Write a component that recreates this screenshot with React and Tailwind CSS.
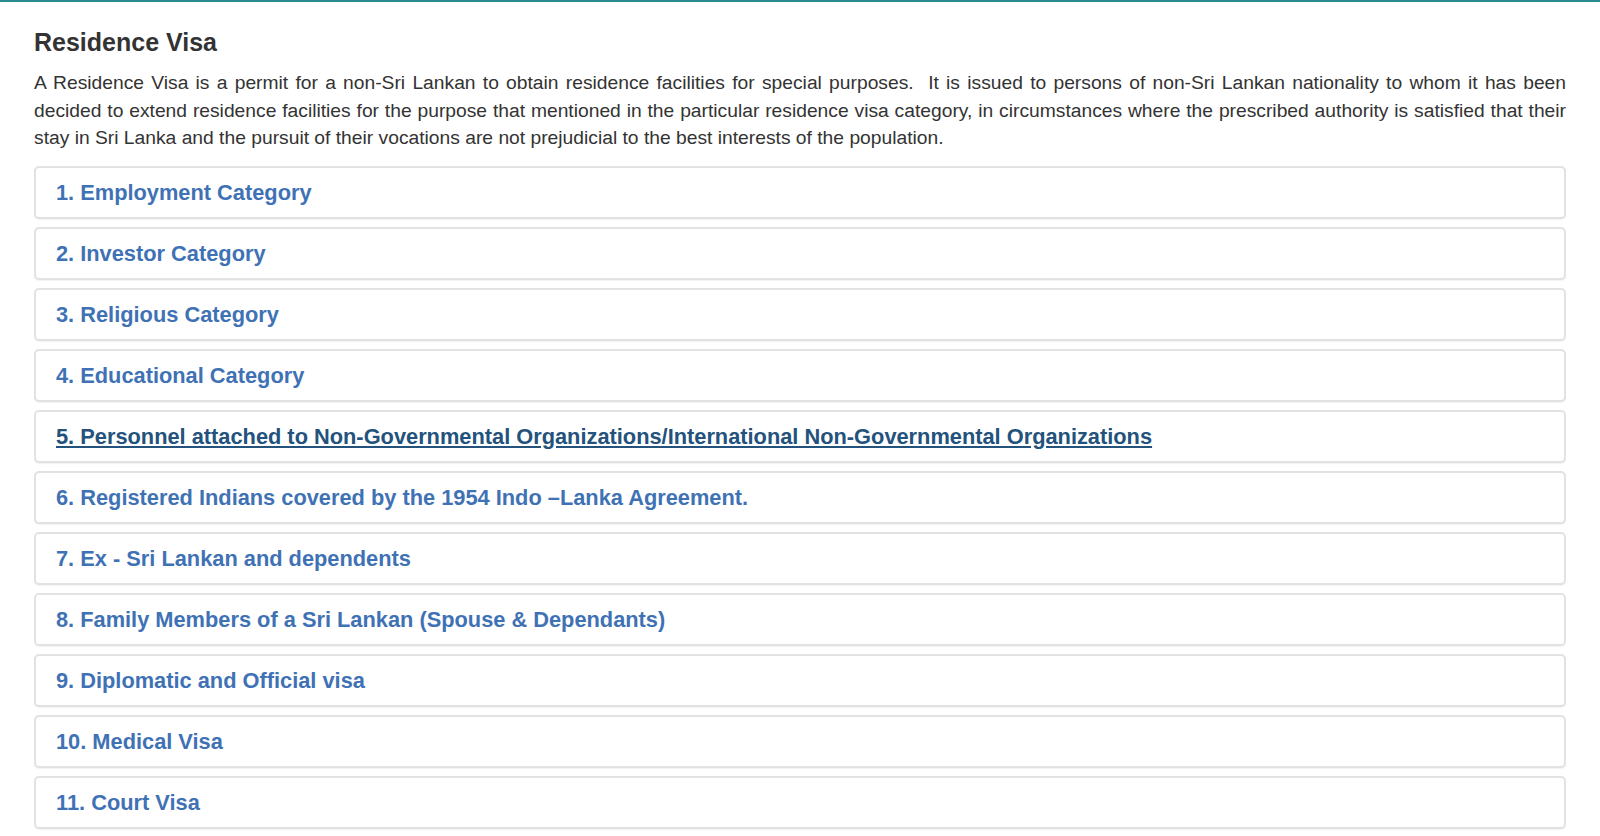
import React from 'react';

const categories = [
    "1. Employment Category",
    "2. Investor Category",
    "3. Religious Category",
    "4. Educational Category",
    "5. Personnel attached to Non-Governmental Organizations/International Non-Governmental Organizations",
    "6. Registered Indians covered by the 1954 Indo –Lanka Agreement.",
    "7. Ex - Sri Lankan and dependents",
    "8. Family Members of a Sri Lankan (Spouse & Dependants)",
    "9. Diplomatic and Official visa",
    "10. Medical Visa",
    "11. Court Visa",
];

export default function App() {
    return (
        <div className="min-h-screen bg-white border-t-2 border-[#2b8a8e] text-[#333] font-['Liberation_Sans',Arial,sans-serif]">
            <div className="px-[34px] pt-[26px]">
                {/* Title */}
                <h2 className="text-[25px] leading-[28px] font-bold">Residence Visa</h2>

                {/* Intro */}
                <p className="mt-[13px] text-[19.25px] leading-[27.5px] text-justify">
                    A Residence Visa is a permit for a non-Sri Lankan to obtain residence facilities for special purposes.&nbsp; It is issued to persons of non-Sri Lankan nationality to whom it has been decided to extend residence facilities for the purpose that mentioned in the particular residence visa category, in circumstances where the prescribed authority is satisfied that their stay in Sri Lanka and the pursuit of their vocations are not prejudicial to the best interests of the population.
                </p>

                {/* Category panels */}
                <div className="mt-[14px] flex flex-col gap-[8px]">
                    {categories.map((label, i) => (
                        <div
                            key={label}
                            className="flex items-center h-[53px] border-2 border-[#e2e2e2] rounded-[5px] bg-white shadow-[0_1px_1px_rgba(0,0,0,0.05)] px-[20px] text-[21.8px] leading-[25px]"
                        >
                            <a
                                href="#"
                                className={
                                    i === 4
                                        ? "font-bold text-[#23527c] underline underline-offset-[2px]"
                                        : "font-bold text-[#3f72b5] hover:text-[#23527c] hover:underline"
                                }
                            >
                                {label}
                            </a>
                        </div>
                    ))}
                </div>
            </div>
        </div>
    );
}
